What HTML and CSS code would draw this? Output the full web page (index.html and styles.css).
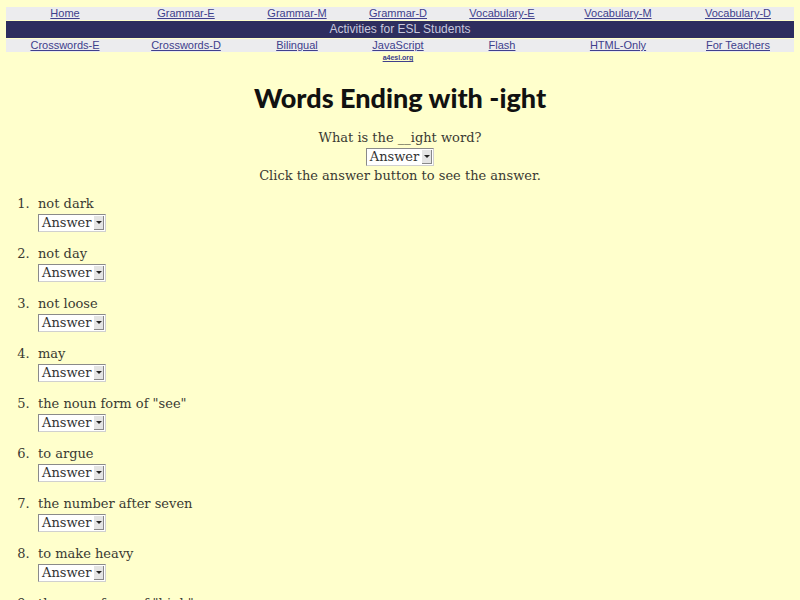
FILE: index.html
```html
<!DOCTYPE html>
<html>
<head>
<meta charset="utf-8">
<title>Words Ending with -ight</title>
<link rel="stylesheet" href="styles.css">
</head>
<body>
<div class="nav">
  <div class="row light">
    <a href="#">Home</a>
    <a href="#">Grammar-E</a>
    <a href="#">Grammar-M</a>
    <a href="#">Grammar-D</a>
    <a href="#">Vocabulary-E</a>
    <a href="#">Vocabulary-M</a>
    <a href="#">Vocabulary-D</a>
  </div>
  <div class="bar">Activities for ESL Students</div>
  <div class="row light">
    <a href="#">Crosswords-E</a>
    <a href="#">Crosswords-D</a>
    <a href="#">Bilingual</a>
    <a href="#">JavaScript</a>
    <a href="#">Flash</a>
    <a href="#">HTML-Only</a>
    <a href="#">For Teachers</a>
  </div>
  <div class="row small">
    <span></span><span></span><span></span>
    <a href="#">a4esl.org</a>
    <span></span><span></span><span></span>
  </div>
</div>

<h1 class="title">Words Ending with -ight</h1>

<div class="intro">
  <div class="line">What is the __ight word?</div>
  <div class="line sel"><span class="select"><span class="val">Answer</span><span class="arrow"></span></span></div>
  <div class="line">Click the answer button to see the answer.</div>
</div>

<ol class="quiz">
  <li><div class="line">not dark</div><div class="line sel"><span class="select"><span class="val">Answer</span><span class="arrow"></span></span></div></li>
  <li><div class="line">not day</div><div class="line sel"><span class="select"><span class="val">Answer</span><span class="arrow"></span></span></div></li>
  <li><div class="line">not loose</div><div class="line sel"><span class="select"><span class="val">Answer</span><span class="arrow"></span></span></div></li>
  <li><div class="line">may</div><div class="line sel"><span class="select"><span class="val">Answer</span><span class="arrow"></span></span></div></li>
  <li><div class="line">the noun form of "see"</div><div class="line sel"><span class="select"><span class="val">Answer</span><span class="arrow"></span></span></div></li>
  <li><div class="line">to argue</div><div class="line sel"><span class="select"><span class="val">Answer</span><span class="arrow"></span></span></div></li>
  <li><div class="line">the number after seven</div><div class="line sel"><span class="select"><span class="val">Answer</span><span class="arrow"></span></span></div></li>
  <li><div class="line">to make heavy</div><div class="line sel"><span class="select"><span class="val">Answer</span><span class="arrow"></span></span></div></li>
  <li><div class="line">the noun form of "high"</div><div class="line sel"><span class="select"><span class="val">Answer</span><span class="arrow"></span></span></div></li>
</ol>
</body>
</html>
```

FILE: styles.css
```css
html, body {
  margin: 0;
  padding: 0;
}
body {
  background: #ffffcc;
  padding: 7px 6px 0 6px;
  font-family: "DejaVu Serif", serif;
  font-size: 13px;
  color: #3a3a33;
}
.nav {
  display: flex;
  flex-direction: column;
  gap: 1px;
}
.row {
  display: grid;
  grid-template-columns: 118fr 124fr 98fr 104fr 104fr 128fr 112fr;
  font-family: "Liberation Sans", Arial, sans-serif;
  font-size: 11px;
  line-height: 13px;
  text-align: center;
}
.row a {
  color: #40408c;
  text-decoration: underline;
}
.light {
  background: #ececee;
}
.small {
  font-size: 7px;
  line-height: 9px;
  font-weight: bold;
}
.bar {
  background: #2e2e5f;
  color: #c9c9de;
  font-family: "Liberation Sans", Arial, sans-serif;
  font-size: 12px;
  line-height: 17px;
  text-align: center;
}
.title {
  margin: 18px 0 13px 0;
  text-align: center;
  font-family: "Lato", sans-serif;
  font-weight: 900;
  font-size: 27px;
  line-height: 36px;
  color: #111;
}
.intro {
  text-align: center;
}
.line {
  line-height: 18px;
  height: 18px;
}
.line.sel {
  height: 20px;
  line-height: 20px;
  display: flex;
  align-items: center;
}
.intro .line.sel {
  justify-content: center;
}
.select {
  display: inline-flex;
  align-items: center;
  height: 16px;
  background: #fff;
  border: 1px solid;
  border-color: #8a8a8a #d0d0d0 #d0d0d0 #8a8a8a;
  padding-left: 3px;
  padding-right: 1px;
  gap: 3px;
}
.val {
  font-size: 13px;
  line-height: 16px;
  color: #333;
}
.arrow {
  width: 10px;
  height: 14px;
  background: #e4e4e4;
  border-right: 1px solid #888;
  border-bottom: 1px solid #888;
  box-sizing: border-box;
  display: flex;
  align-items: center;
  justify-content: center;
}
.arrow::after {
  content: "";
  border-left: 3px solid transparent;
  border-right: 3px solid transparent;
  border-top: 3px solid #222;
}
.quiz {
  margin: 10px 0 0 0;
  padding-left: 32px;
}
.quiz li {
  margin-bottom: 12px;
  padding-left: 0;
}
.quiz li::marker {
  content: counter(list-item) ".\00a0\00a0";
}
```
